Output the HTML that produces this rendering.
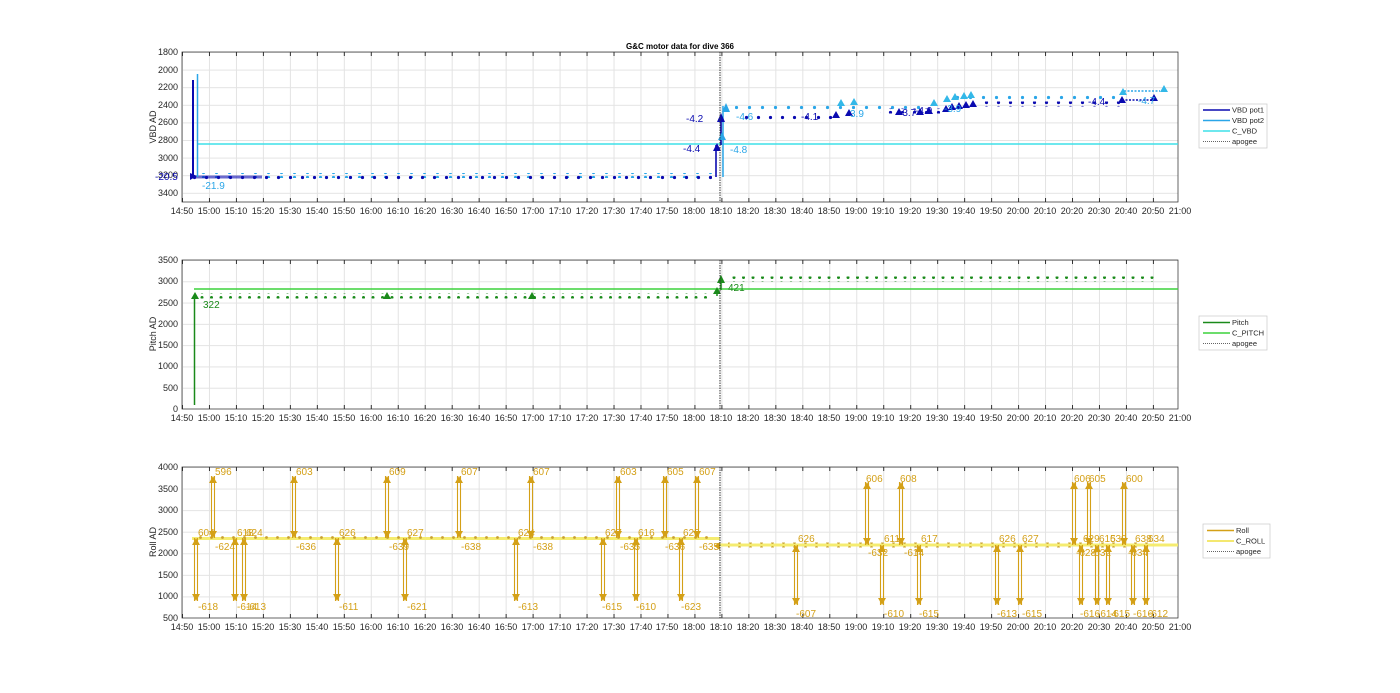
<!DOCTYPE html>
<html><head><meta charset="utf-8"><style>
html,body{margin:0;padding:0;background:#fff;}
svg{display:block;font-family:"Liberation Sans",Arial,sans-serif;}
.t{font-size:9px;fill:#262626;}
.yl{font-size:9px;fill:#262626;text-anchor:end;dominant-baseline:central;}
.xl{font-size:9px;fill:#262626;text-anchor:middle;}
.lg{font-size:7.5px;fill:#262626;dominant-baseline:central;}
.r{font-size:10px;fill:#d4a017;}
</style></head><body>
<svg width="1400" height="693" viewBox="0 0 1400 693" xmlns="http://www.w3.org/2000/svg">
<defs>
<pattern id="vg" x="182" y="0" width="26.97" height="700" patternUnits="userSpaceOnUse"><line x1="0.5" y1="0" x2="0.5" y2="700" stroke="#e3e3e3" stroke-width="1"/></pattern>
<pattern id="hg1" x="0" y="52" width="1400" height="17.6" patternUnits="userSpaceOnUse"><line x1="0" y1="0.5" x2="1400" y2="0.5" stroke="#e3e3e3"/></pattern>
<pattern id="hg2" x="0" y="260" width="1400" height="21.286" patternUnits="userSpaceOnUse"><line x1="0" y1="0.5" x2="1400" y2="0.5" stroke="#e3e3e3"/></pattern>
<pattern id="hg3" x="0" y="467" width="1400" height="21.571" patternUnits="userSpaceOnUse"><line x1="0" y1="0.5" x2="1400" y2="0.5" stroke="#e3e3e3"/></pattern>
<pattern id="tk" x="182" y="0" width="26.97" height="700" patternUnits="userSpaceOnUse"><line x1="0.5" y1="0" x2="0.5" y2="700" stroke="#333" stroke-width="1"/></pattern>
<pattern id="d1" x="0" y="0" width="12" height="5" patternUnits="userSpaceOnUse"><circle cx="2.5" cy="2.5" r="1.6" fill="#0a0ab0"/></pattern>
<pattern id="d2" x="6" y="0" width="13" height="5" patternUnits="userSpaceOnUse"><circle cx="2.5" cy="2.5" r="1.6" fill="#2aa6e8"/></pattern>
<pattern id="dp" x="0" y="0" width="9.5" height="5" patternUnits="userSpaceOnUse"><circle cx="2.5" cy="2.5" r="1.5" fill="#1a8a1a"/></pattern>
<pattern id="dr" x="0" y="0" width="11" height="5" patternUnits="userSpaceOnUse"><circle cx="2.5" cy="2.5" r="1.4" fill="#c9a030"/></pattern>
</defs>

<!-- ===== Panel 1 ===== -->
<rect x="182" y="52" width="996" height="150" fill="url(#vg)"/>
<rect x="182" y="52" width="996" height="150" fill="url(#hg1)"/>
<rect x="182" y="52" width="996" height="4" fill="url(#tk)"/>
<rect x="182" y="198" width="996" height="4" fill="url(#tk)"/>
<rect x="182" y="52" width="996" height="150" fill="none" stroke="#262626" stroke-width="0.7"/>
<text x="680" y="49" text-anchor="middle" style="font-size:8px;font-weight:bold;fill:#000">G&amp;C motor data for dive 366</text>
<g class="yl"><text x="178" y="52">1800</text><text x="178" y="70">2000</text><text x="178" y="87">2200</text><text x="178" y="105">2400</text><text x="178" y="122">2600</text><text x="178" y="140">2800</text><text x="178" y="158">3000</text><text x="178" y="175">3200</text><text x="178" y="193">3400</text></g>
<text transform="translate(156,127) rotate(-90)" text-anchor="middle" class="t">VBD AD</text>
<g class="xl" transform="translate(0,214)"><text x="182">14:50</text><text x="209">15:00</text><text x="236">15:10</text><text x="263">15:20</text><text x="290">15:30</text><text x="317">15:40</text><text x="344">15:50</text><text x="371">16:00</text><text x="398">16:10</text><text x="425">16:20</text><text x="452">16:30</text><text x="479">16:40</text><text x="506">16:50</text><text x="533">17:00</text><text x="560">17:10</text><text x="587">17:20</text><text x="614">17:30</text><text x="641">17:40</text><text x="667">17:50</text><text x="694">18:00</text><text x="721">18:10</text><text x="748">18:20</text><text x="775">18:30</text><text x="802">18:40</text><text x="829">18:50</text><text x="856">19:00</text><text x="883">19:10</text><text x="910">19:20</text><text x="937">19:30</text><text x="964">19:40</text><text x="991">19:50</text><text x="1018">20:00</text><text x="1045">20:10</text><text x="1072">20:20</text><text x="1099">20:30</text><text x="1126">20:40</text><text x="1153">20:50</text><text x="1180">21:00</text></g>
<line x1="197" y1="144" x2="1178" y2="144" stroke="#3ee0e8" stroke-width="1.5"/>
<rect x="192" y="173" width="520" height="5" fill="url(#d2)"/>
<rect x="192" y="174.5" width="520" height="5" fill="url(#d1)"/>
<rect x="192" y="175.5" width="70" height="3" fill="#0a0ab0" opacity="0.6"/>
<line x1="193" y1="80" x2="193" y2="177" stroke="#0a0ab0" stroke-width="2"/>
<line x1="197.5" y1="74" x2="197.5" y2="177" stroke="#2aa6e8" stroke-width="1.5"/>
<path d="M190 173 L197 176 L190 180Z" fill="#0a0ab0"/>
<path d="M716 177 V145 M721 145 V116" stroke="#0a0ab0" stroke-width="1.6"/>
<path d="M723 177 V106" stroke="#2aa6e8" stroke-width="1.5"/>
<path d="M713 151 L717 143 L721 151Z M717 122 L721 113 L725 122Z" fill="#0a0ab0"/>
<path d="M718 140 L722 132 L726 140Z M722 112 L726 103 L730 112Z" fill="#2aa6e8"/>
<rect x="735" y="105.5" width="195" height="5" fill="url(#d2)"/>
<rect x="740" y="114.5" width="95" height="5" fill="url(#d1)"/>
<rect x="880" y="108.5" width="60" height="5" fill="url(#d1)"/>
<rect x="950" y="94.5" width="170" height="5" fill="url(#d2)"/>
<rect x="980" y="101.5" width="140" height="5" fill="url(#d1)"/>
<line x1="1124" y1="91" x2="1160" y2="91" stroke="#2aa6e8" stroke-width="1.5" stroke-dasharray="2 1.5"/>
<line x1="1122" y1="100" x2="1155" y2="100" stroke="#0a0ab0" stroke-width="1.5" stroke-dasharray="2 1.5"/>
<g fill="#33b8e8"><path d="M837 106l4-7 4 7z M850 105l4-7 4 7z M930 106l4-7 4 7z M943 102l4-7 4 7z M951 100l4-7 4 7z M960 99l4-7 4 7z M967 98l4-7 4 7z M1119 95l4-7 4 7z M1160 92l4-7 4 7z"/></g>
<g fill="#0a0ab0"><path d="M832 118l4-7 4 7z M845 116l4-7 4 7z M895 115l4-7 4 7z M916 115l4-7 4 7z M925 114l4-7 4 7z M942 112l4-7 4 7z M948 110l4-7 4 7z M955 109l4-7 4 7z M962 108l4-7 4 7z M969 107l4-7 4 7z M1118 103l4-7 4 7z M1150 101l4-7 4 7z"/></g>
<g style="font-size:10px">
<text x="155" y="180" fill="#0a0ab0">-20.5</text><text x="202" y="189" fill="#2aa6e8">-21.9</text>
<text x="686" y="122" fill="#0a0ab0">-4.2</text><text x="683" y="152" fill="#0a0ab0">-4.4</text>
<text x="736" y="120" fill="#2aa6e8">-4.6</text><text x="730" y="153" fill="#2aa6e8">-4.8</text>
<text x="801" y="120" fill="#0a0ab0">-4.1</text><text x="850" y="117" fill="#2aa6e8">3.9</text>
<text x="899" y="116" fill="#0a0ab0">-3.7</text><text x="915" y="114" fill="#0a0ab0">-4.0</text>
<text x="944" y="112" fill="#2aa6e8">-3.9</text><text x="1088" y="105" fill="#0a0ab0">-4.4</text><text x="1138" y="104" fill="#2aa6e8">-4.7</text>
</g>
<line x1="720" y1="52" x2="720" y2="202" stroke="#333" stroke-width="1" stroke-dasharray="1.5 1"/>
<rect x="1199" y="104" width="68" height="44" fill="#fff" stroke="#c8c8c8" stroke-width="0.7"/>
<line x1="1203" y1="110" x2="1230" y2="110" stroke="#0a0ab0" stroke-width="1.5"/><text class="lg" x="1232" y="110">VBD pot1</text>
<line x1="1203" y1="120.5" x2="1230" y2="120.5" stroke="#2aa6e8" stroke-width="1.5"/><text class="lg" x="1232" y="120.5">VBD pot2</text>
<line x1="1203" y1="131" x2="1230" y2="131" stroke="#3ee0e8" stroke-width="1.5"/><text class="lg" x="1232" y="131">C_VBD</text>
<line x1="1203" y1="141.5" x2="1230" y2="141.5" stroke="#333" stroke-width="0.8" stroke-dasharray="1 1"/><text class="lg" x="1232" y="141.5">apogee</text>

<!-- ===== Panel 2 ===== -->
<rect x="182" y="260" width="996" height="149" fill="url(#vg)"/>
<rect x="182" y="260" width="996" height="149" fill="url(#hg2)"/>
<rect x="182" y="260" width="996" height="4" fill="url(#tk)"/>
<rect x="182" y="405" width="996" height="4" fill="url(#tk)"/>
<rect x="182" y="260" width="996" height="149" fill="none" stroke="#262626" stroke-width="0.7"/>
<g class="yl"><text x="178" y="260">3500</text><text x="178" y="281">3000</text><text x="178" y="303">2500</text><text x="178" y="324">2000</text><text x="178" y="345">1500</text><text x="178" y="366">1000</text><text x="178" y="388">500</text><text x="178" y="409">0</text></g>
<text transform="translate(156,334) rotate(-90)" text-anchor="middle" class="t">Pitch AD</text>
<g class="xl" transform="translate(0,421)"><text x="182">14:50</text><text x="209">15:00</text><text x="236">15:10</text><text x="263">15:20</text><text x="290">15:30</text><text x="317">15:40</text><text x="344">15:50</text><text x="371">16:00</text><text x="398">16:10</text><text x="425">16:20</text><text x="452">16:30</text><text x="479">16:40</text><text x="506">16:50</text><text x="533">17:00</text><text x="560">17:10</text><text x="587">17:20</text><text x="614">17:30</text><text x="641">17:40</text><text x="667">17:50</text><text x="694">18:00</text><text x="721">18:10</text><text x="748">18:20</text><text x="775">18:30</text><text x="802">18:40</text><text x="829">18:50</text><text x="856">19:00</text><text x="883">19:10</text><text x="910">19:20</text><text x="937">19:30</text><text x="964">19:40</text><text x="991">19:50</text><text x="1018">20:00</text><text x="1045">20:10</text><text x="1072">20:20</text><text x="1099">20:30</text><text x="1126">20:40</text><text x="1153">20:50</text><text x="1180">21:00</text></g>
<line x1="194" y1="289" x2="1178" y2="289" stroke="#3cd23c" stroke-width="1.5"/>
<rect x="198" y="293.5" width="514" height="5" fill="url(#dp)"/>
<rect x="728" y="276.5" width="432" height="5" fill="url(#dp)"/>
<line x1="194.5" y1="405" x2="194.5" y2="296" stroke="#1a8a1a" stroke-width="1.5"/>
<path d="M717 296 V290 M721 290 V279" stroke="#1a8a1a" stroke-width="1.5"/>
<g fill="#1a8a1a"><path d="M191 299l4-7 4 7z M383 299l4-7 4 7z M528 299l4-7 4 7z M713 294l4-7 4 7z M717 283l4-8 4 8z"/></g>
<text x="203" y="308" style="font-size:10px" fill="#1a8a1a">322</text>
<text x="728" y="291" style="font-size:10px" fill="#1a8a1a">421</text>
<line x1="720" y1="260" x2="720" y2="409" stroke="#333" stroke-width="1" stroke-dasharray="1.5 1"/>
<rect x="1199" y="316" width="68" height="34" fill="#fff" stroke="#c8c8c8" stroke-width="0.7"/>
<line x1="1203" y1="322.5" x2="1230" y2="322.5" stroke="#1a8a1a" stroke-width="1.5"/><text class="lg" x="1232" y="322.5">Pitch</text>
<line x1="1203" y1="333" x2="1230" y2="333" stroke="#3cd23c" stroke-width="1.5"/><text class="lg" x="1232" y="333">C_PITCH</text>
<line x1="1203" y1="343.5" x2="1230" y2="343.5" stroke="#333" stroke-width="0.8" stroke-dasharray="1 1"/><text class="lg" x="1232" y="343.5">apogee</text>

<!-- ===== Panel 3 ===== -->
<rect x="182" y="467" width="996" height="151" fill="url(#vg)"/>
<rect x="182" y="467" width="996" height="151" fill="url(#hg3)"/>
<rect x="182" y="467" width="996" height="4" fill="url(#tk)"/>
<rect x="182" y="614" width="996" height="4" fill="url(#tk)"/>
<rect x="182" y="467" width="996" height="151" fill="none" stroke="#262626" stroke-width="0.7"/>
<g class="yl"><text x="178" y="467">4000</text><text x="178" y="489">3500</text><text x="178" y="510">3000</text><text x="178" y="532">2500</text><text x="178" y="553">2000</text><text x="178" y="575">1500</text><text x="178" y="596">1000</text><text x="178" y="618">500</text></g>
<text transform="translate(156,542) rotate(-90)" text-anchor="middle" class="t">Roll AD</text>
<g class="xl" transform="translate(0,630)"><text x="182">14:50</text><text x="209">15:00</text><text x="236">15:10</text><text x="263">15:20</text><text x="290">15:30</text><text x="317">15:40</text><text x="344">15:50</text><text x="371">16:00</text><text x="398">16:10</text><text x="425">16:20</text><text x="452">16:30</text><text x="479">16:40</text><text x="506">16:50</text><text x="533">17:00</text><text x="560">17:10</text><text x="587">17:20</text><text x="614">17:30</text><text x="641">17:40</text><text x="667">17:50</text><text x="694">18:00</text><text x="721">18:10</text><text x="748">18:20</text><text x="775">18:30</text><text x="802">18:40</text><text x="829">18:50</text><text x="856">19:00</text><text x="883">19:10</text><text x="910">19:20</text><text x="937">19:30</text><text x="964">19:40</text><text x="991">19:50</text><text x="1018">20:00</text><text x="1045">20:10</text><text x="1072">20:20</text><text x="1099">20:30</text><text x="1126">20:40</text><text x="1153">20:50</text><text x="1180">21:00</text></g>
<line x1="192" y1="538.5" x2="720" y2="538.5" stroke="#f5ec70" stroke-width="3"/>
<line x1="720" y1="545" x2="1178" y2="545" stroke="#f5ec70" stroke-width="3"/>
<rect x="196" y="536" width="520" height="5" fill="url(#dr)"/>
<rect x="728" y="542.5" width="420" height="5" fill="url(#dr)"/>
<g stroke="#d4a017" stroke-width="1.1" fill="none">
<path d="M194.5 538V601M197.5 538V601 M211.5 476V538M214.5 476V538 M233.5 538V601M236.5 538V601 M242.5 538V601M245.5 538V601 M292.5 476V538M295.5 476V538 M335.5 538V601M338.5 538V601 M385.5 476V538M388.5 476V538 M403.5 538V601M406.5 538V601 M457.5 476V538M460.5 476V538 M514.5 538V601M517.5 538V601 M529.5 476V538M532.5 476V538 M601.5 538V601M604.5 538V601 M616.5 476V538M619.5 476V538 M634.5 538V601M637.5 538V601 M663.5 476V538M666.5 476V538 M679.5 538V601M682.5 538V601 M695.5 476V538M698.5 476V538"/>
<path d="M794.5 545V605M797.5 545V605 M865.5 482V545M868.5 482V545 M880.5 545V605M883.5 545V605 M899.5 482V545M902.5 482V545 M917.5 545V605M920.5 545V605 M995.5 545V605M998.5 545V605 M1018.5 545V605M1021.5 545V605 M1072.5 482V545M1075.5 482V545 M1079.5 545V605M1082.5 545V605 M1087.5 482V545M1090.5 482V545 M1095.5 545V605M1098.5 545V605 M1106.5 545V605M1109.5 545V605 M1122.5 482V545M1125.5 482V545 M1131.5 545V605M1134.5 545V605 M1144.5 545V605M1147.5 545V605"/>
</g>
<g fill="#d4a017">
<path d="M192 545l4-7 4 7z M192 594l4 7 4-7z M209 483l4-7 4 7z M209 531l4 7 4-7z M231 545l4-7 4 7z M231 594l4 7 4-7z M240 545l4-7 4 7z M240 594l4 7 4-7z M290 483l4-7 4 7z M290 531l4 7 4-7z M333 545l4-7 4 7z M333 594l4 7 4-7z M383 483l4-7 4 7z M383 531l4 7 4-7z M401 545l4-7 4 7z M401 594l4 7 4-7z M455 483l4-7 4 7z M455 531l4 7 4-7z M512 545l4-7 4 7z M512 594l4 7 4-7z M527 483l4-7 4 7z M527 531l4 7 4-7z M599 545l4-7 4 7z M599 594l4 7 4-7z M614 483l4-7 4 7z M614 531l4 7 4-7z M632 545l4-7 4 7z M632 594l4 7 4-7z M661 483l4-7 4 7z M661 531l4 7 4-7z M677 545l4-7 4 7z M677 594l4 7 4-7z M693 483l4-7 4 7z M693 531l4 7 4-7z"/>
<path d="M792 552l4-7 4 7z M792 598l4 7 4-7z M863 489l4-7 4 7z M863 538l4 7 4-7z M878 552l4-7 4 7z M878 598l4 7 4-7z M897 489l4-7 4 7z M897 538l4 7 4-7z M915 552l4-7 4 7z M915 598l4 7 4-7z M993 552l4-7 4 7z M993 598l4 7 4-7z M1016 552l4-7 4 7z M1016 598l4 7 4-7z M1070 489l4-7 4 7z M1070 538l4 7 4-7z M1077 552l4-7 4 7z M1077 598l4 7 4-7z M1085 489l4-7 4 7z M1085 538l4 7 4-7z M1093 552l4-7 4 7z M1093 598l4 7 4-7z M1104 552l4-7 4 7z M1104 598l4 7 4-7z M1120 489l4-7 4 7z M1120 538l4 7 4-7z M1129 552l4-7 4 7z M1129 598l4 7 4-7z M1142 552l4-7 4 7z M1142 598l4 7 4-7z M714 546l6-4v8z"/>
</g>
<g class="r">
<text x="198" y="536">604</text><text x="198" y="610">-618</text>
<text x="215" y="475">596</text><text x="215" y="550">-624</text>
<text x="237" y="536">618</text><text x="237" y="610">-614</text>
<text x="246" y="536">624</text><text x="246" y="610">-613</text>
<text x="296" y="475">603</text><text x="296" y="550">-636</text>
<text x="339" y="536">626</text><text x="339" y="610">-611</text>
<text x="389" y="475">609</text><text x="389" y="550">-639</text>
<text x="407" y="536">627</text><text x="407" y="610">-621</text>
<text x="461" y="475">607</text><text x="461" y="550">-638</text>
<text x="518" y="536">624</text><text x="518" y="610">-613</text>
<text x="533" y="475">607</text><text x="533" y="550">-638</text>
<text x="605" y="536">627</text><text x="602" y="610">-615</text>
<text x="620" y="475">603</text><text x="620" y="550">-635</text>
<text x="638" y="536">616</text><text x="636" y="610">-610</text>
<text x="667" y="475">605</text><text x="665" y="550">-636</text>
<text x="683" y="536">625</text><text x="681" y="610">-623</text>
<text x="699" y="475">607</text><text x="699" y="550">-635</text>
<text x="798" y="542">626</text><text x="796" y="617">-607</text>
<text x="866" y="482">606</text><text x="868" y="556">-632</text>
<text x="884" y="542">611</text><text x="884" y="617">-610</text>
<text x="900" y="482">608</text><text x="904" y="556">-614</text>
<text x="921" y="542">617</text><text x="919" y="617">-615</text>
<text x="999" y="542">626</text><text x="997" y="617">-613</text>
<text x="1022" y="542">627</text><text x="1022" y="617">-615</text>
<text x="1074" y="482">606</text><text x="1076" y="556">-628</text>
<text x="1089" y="482">605</text><text x="1091" y="556">-632</text>
<text x="1083" y="542">629</text><text x="1080" y="617">-616</text>
<text x="1099" y="542">615</text><text x="1097" y="617">-614</text>
<text x="1110" y="542">639</text><text x="1110" y="617">-615</text>
<text x="1126" y="482">600</text><text x="1128" y="556">-634</text>
<text x="1135" y="542">638</text><text x="1133" y="617">-616</text>
<text x="1148" y="542">634</text><text x="1148" y="617">-612</text>
</g>
<line x1="720" y1="467" x2="720" y2="618" stroke="#333" stroke-width="1" stroke-dasharray="1.5 1"/>
<rect x="1203" y="524" width="67" height="34" fill="#fff" stroke="#c8c8c8" stroke-width="0.7"/>
<line x1="1207" y1="530.5" x2="1234" y2="530.5" stroke="#d4a017" stroke-width="1.5"/><text class="lg" x="1236" y="530.5">Roll</text>
<line x1="1207" y1="541" x2="1234" y2="541" stroke="#f0e040" stroke-width="1.5"/><text class="lg" x="1236" y="541">C_ROLL</text>
<line x1="1207" y1="551.5" x2="1234" y2="551.5" stroke="#333" stroke-width="0.8" stroke-dasharray="1 1"/><text class="lg" x="1236" y="551.5">apogee</text>
</svg>
</body></html>
